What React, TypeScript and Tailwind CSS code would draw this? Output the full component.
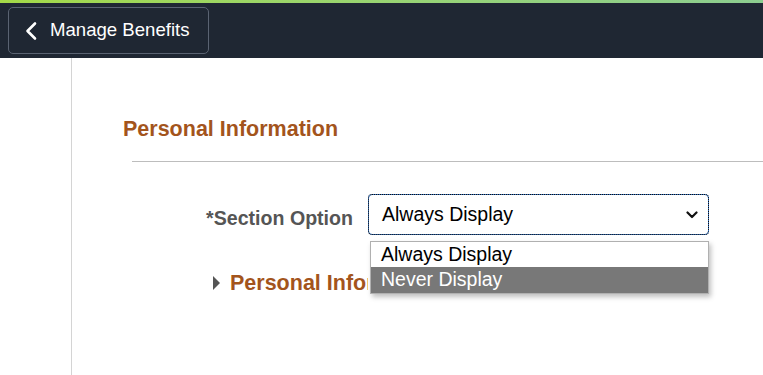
export default function App() {
  return (
    <div className="w-[763px] h-[375px] overflow-hidden bg-white font-['Liberation_Sans',Arial,sans-serif]">
      {/* Top accent strip */}
      <div className="h-[3px] bg-gradient-to-r from-[#a4da48] to-[#8ccd90]" />

      {/* Header */}
      <div className="h-[55px] bg-[#1f2733] flex items-center px-[8px]">
        <button className="h-[47px] w-[201px] border border-[#5a6372] rounded-[5px] flex items-center pl-[14px] text-white">
          <svg width="16" height="20" viewBox="0 0 16 20" className="shrink-0">
            <path d="M12 2.5 L4.5 10 L12 17.5" fill="none" stroke="#fff" strokeWidth="2.6" strokeLinecap="round" strokeLinejoin="round" />
          </svg>
          <span className="ml-[11px] text-[18.6px] leading-none">Manage Benefits</span>
        </button>
      </div>

      {/* Body */}
      <div className="flex h-[317px]">
        <div className="w-[72px] shrink-0 border-r border-[#d4d4d4]" />
        <div className="flex-1 min-w-0">
          <h2 className="mt-[59px] ml-[51px] text-[21.5px] leading-[24px] font-bold text-[#a3541c] whitespace-nowrap">
            Personal Information
          </h2>
          <div className="mt-[20px] ml-[60px] h-px bg-[#bdbdbd]" />

          {/* Section option row */}
          <div className="mt-[32px] ml-[60px] flex items-center">
            <label className="w-[221px] pt-[6px] text-right text-[19.6px] leading-[24px] font-bold text-[#555555]">
              *Section Option
            </label>
            <div className="relative ml-[15px]">
              <div className="w-[341px] h-[41px] border border-[#2f6fc0] rounded-[4px] outline-1 outline-dotted outline-[#111] -outline-offset-1 flex items-center pl-[13px] pr-[10px]">
                <span className="flex-1 text-[19.5px] leading-none text-black">Always Display</span>
                <svg width="12" height="8" viewBox="0 0 12 8">
                  <path d="M1.5 1.5 L6 6 L10.5 1.5" fill="none" stroke="#111" strokeWidth="2.2" strokeLinecap="round" strokeLinejoin="round" />
                </svg>
              </div>

              {/* Open list */}
              <div className="absolute left-[2px] top-[47px] w-[339px] z-10 bg-white border border-[#b0b0b0] shadow-[2px_3px_5px_rgba(0,0,0,0.25)]">
                <div className="h-[25px] flex items-center pl-[10px] text-[19.5px] leading-none text-black">Always Display</div>
                <div className="h-[26px] flex items-center pl-[10px] text-[19.5px] leading-none text-white bg-[#787878]">Never Display</div>
              </div>
            </div>
          </div>

          {/* Collapsed disclosure, partly covered by the open list */}
          <div className="mt-[36px] ml-[141px] flex items-center">
            <div className="w-0 h-0 border-y-[7px] border-y-transparent border-l-[7px] border-l-[#555555]" />
            <span className="ml-[10px] w-[138px] overflow-hidden whitespace-nowrap text-[21.5px] leading-[24px] font-bold text-[#a3541c]">
              Personal Information
            </span>
          </div>
        </div>
      </div>
    </div>
  );
}
